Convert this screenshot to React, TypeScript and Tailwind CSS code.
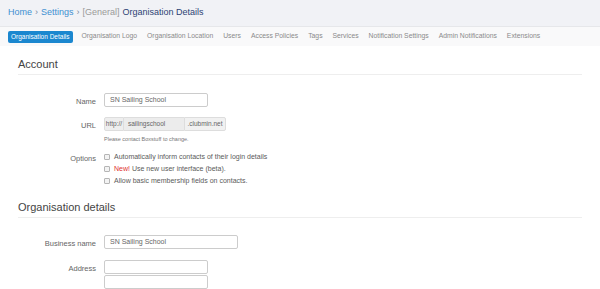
import React from 'react';

const tabs = [
  'Organisation Details',
  'Organisation Logo',
  'Organisation Location',
  'Users',
  'Access Policies',
  'Tags',
  'Services',
  'Notification Settings',
  'Admin Notifications',
  'Extensions',
];

function Row({ label, children, labelClass = '' }: { label: string; children: React.ReactNode; labelClass?: string }) {
  return (
    <div className="flex items-start">
      <div className={`w-[78px] shrink-0 text-right text-[7.5px] text-[#666] ${labelClass}`}>{label}</div>
      <div className="ml-[8px]">{children}</div>
    </div>
  );
}

function Check({ children }: { children: React.ReactNode }) {
  return (
    <div className="flex h-[12px] items-center gap-[4px] text-[7px] text-[#5a5a5a]">
      <span className="inline-block h-[6px] w-[6px] rounded-[1px] border border-[#b5b5b5] bg-[#f3f3f3]"></span>
      <span>{children}</span>
    </div>
  );
}

export default function App() {
  return (
    <div className="h-[289px] w-[600px] overflow-hidden bg-white font-['Liberation_Sans',Arial,sans-serif]">
      <div className="flex h-[26px] items-center bg-[#f1f2f6] px-[8px] text-[9px]">
        <span className="text-[#3d8fd1]">Home</span>
        <span className="mx-[3px] text-[#7a8aa0]">›</span>
        <span className="text-[#3d8fd1]">Settings</span>
        <span className="mx-[3px] text-[#7a8aa0]">›</span>
        <span className="text-[#9a9a9a]">[General]</span>
        <span className="ml-[3px] text-[#2d4374]">Organisation Details</span>
      </div>
      <div className="flex h-[20px] items-center border-t border-[#e6e7ea] bg-[#f9f9fa] pl-[8px] text-[6.8px]">
        {tabs.map((t, i) =>
          i === 0 ? (
            <span key={t} className="mr-[9px] rounded-[2px] bg-[#1b87cf] px-[3px] py-[2px] text-[6.5px] leading-[8px] text-white">
              {t}
            </span>
          ) : (
            <span key={t} className="mr-[10px] text-[#8a8a8a]">
              {t}
            </span>
          )
        )}
      </div>

      <div className="px-[18px] pt-[12px]">
        <div className="border-b border-[#eeeeee] pb-[3px] text-[11px] leading-[13px] text-[#444]">Account</div>
        <div className="mt-[18px] flex flex-col">
          <Row label="Name" labelClass="mt-[3px]">
            <div className="flex h-[14px] w-[104px] items-center rounded-[2px] border border-[#ccc] px-[5px] text-[7px] text-[#666]">SN Sailing School</div>
          </Row>
          <div className="mt-[10px]">
            <Row label="URL" labelClass="mt-[3px]">
              <div className="flex h-[14px] text-[6.5px] text-[#666]">
                <div className="flex w-[20px] items-center justify-center rounded-l-[2px] border border-[#ddd] bg-[#eeeeee]">http://</div>
                <div className="flex w-[60px] items-center border-y border-[#ddd] bg-[#ececec] px-[4px]">sailingschool</div>
                <div className="flex w-[42px] items-center justify-center rounded-r-[2px] border border-[#ddd] bg-[#f1f1f1]">.clubmin.net</div>
              </div>
              <div className="mt-[4px] text-[5.5px] leading-[8px] text-[#777]">Please contact Boxstuff to change.</div>
            </Row>
          </div>
          <div className="mt-[8px]">
            <Row label="Options" labelClass="mt-[2px]">
              <Check>Automatically inform contacts of their login details</Check>
              <Check>
                <span className="text-[#e0322f]">New!</span> Use new user interface (beta).
              </Check>
              <Check>Allow basic membership fields on contacts.</Check>
            </Row>
          </div>
        </div>

        <div className="mt-[14px] border-b border-[#eeeeee] pb-[3px] text-[11px] leading-[13px] text-[#444]">Organisation details</div>
        <div className="mt-[17px] flex flex-col">
          <Row label="Business name" labelClass="mt-[3px]">
            <div className="flex h-[14px] w-[134px] items-center rounded-[2px] border border-[#ccc] px-[5px] text-[7px] text-[#666]">SN Sailing School</div>
          </Row>
          <div className="mt-[10px]">
            <Row label="Address" labelClass="mt-[3px]">
              <div className="h-[14px] w-[104px] rounded-[2px] border border-[#ccc]"></div>
              <div className="mt-[1px] h-[14px] w-[104px] rounded-[2px] border border-[#ccc]"></div>
            </Row>
          </div>
        </div>
      </div>
    </div>
  );
}
